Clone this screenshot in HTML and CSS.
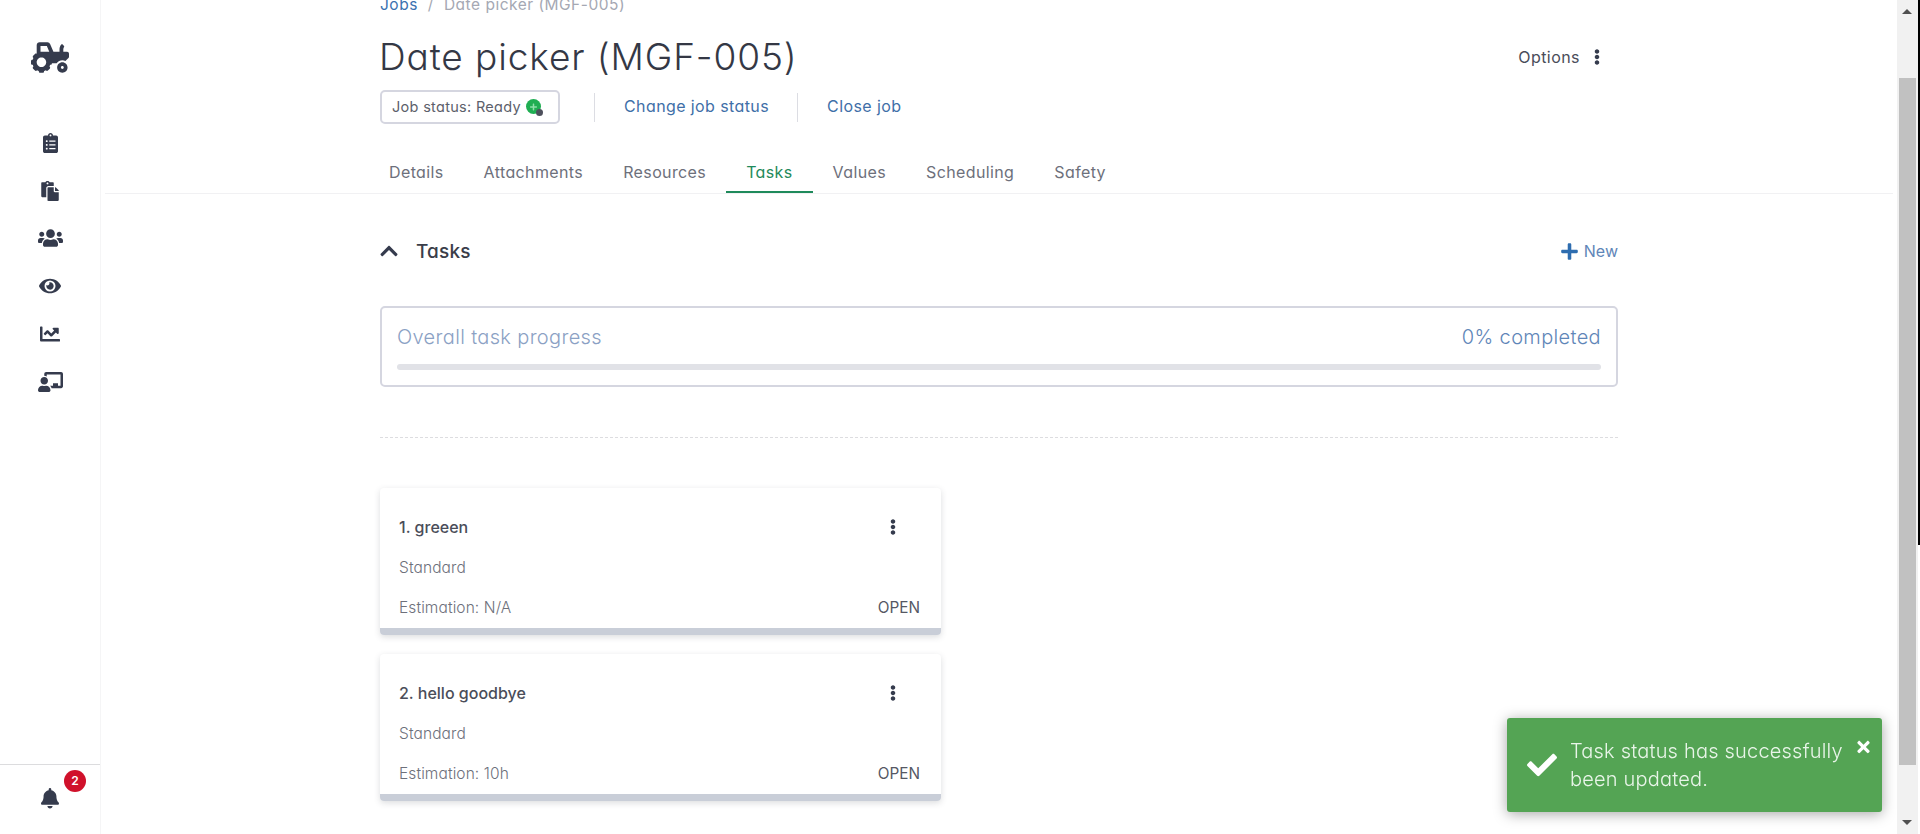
FILE: index.html
```html
<!DOCTYPE html>
<html lang="en">
<head>
    <meta charset="UTF-8">
    <title>Date picker (MGF-005)</title>
    <link rel="stylesheet" href="styles.css">
</head>
<body>

<nav class="sidebar">
    <svg class="logo" viewBox="0 0 640 512"><path d="M528 336c-48.6 0-88 39.4-88 88s39.4 88 88 88 88-39.4 88-88-39.4-88-88-88zm0 112c-13.23 0-24-10.77-24-24s10.77-24 24-24 24 10.77 24 24-10.77 24-24 24zm80-288h-64v-40.2c0-14.12 4.7-27.76 13.15-38.84 4.42-5.8 3.55-14.06-1.32-19.49L534.2 37.3c-6.66-7.45-18.32-6.92-24.7.78C490.58 60.9 480 89.81 480 119.8V160H377.67L321.58 29.14A47.914 47.914 0 0 0 277.45 0H144c-26.47 0-48 21.53-48 48v146.52c-8.63-6.73-20.96-6.46-28.89 1.47L36 227.1c-8.59 8.59-8.59 22.52 0 31.11l5.06 5.06c-4.99 9.26-8.96 18.82-11.91 28.72H22c-12.15 0-22 9.85-22 22v44c0 12.15 9.85 22 22 22h7.14c2.96 9.91 6.92 19.46 11.91 28.73l-5.06 5.06c-8.59 8.59-8.59 22.52 0 31.11L67.1 476c8.59 8.59 22.52 8.59 31.11 0l5.06-5.06c9.26 4.99 18.82 8.96 28.72 11.91V490c0 12.15 9.85 22 22 22h44c12.15 0 22-9.85 22-22v-7.14c9.9-2.95 19.46-6.92 28.72-11.91l5.06 5.06c8.59 8.59 22.52 8.59 31.11 0l31.11-31.11c8.59-8.59 8.59-22.52 0-31.11l-5.06-5.06c4.99-9.26 8.96-18.82 11.91-28.72H330c12.15 0 22-9.85 22-22v-6h80.54c21.91-28.99 56.32-48 95.46-48 18.64 0 36.07 4.61 51.8 12.2l50.82-50.82c6-6 9.37-14.14 9.37-22.63V192c.01-17.67-14.32-32-31.99-32zM176 416c-44.18 0-80-35.82-80-80s35.82-80 80-80 80 35.82 80 80-35.82 80-80 80zm22-256h-38V64h106.89l41.15 96H198z"/></svg>

    <div class="nav-icons">
        <span class="nav-icon"><svg class="ic-clip" viewBox="0 0 384 512"><path d="M336 64h-80c0-35.3-28.7-64-64-64s-64 28.7-64 64H48C21.5 64 0 85.5 0 112v352c0 26.5 21.5 48 48 48h288c26.5 0 48-21.5 48-48V112c0-26.5-21.5-48-48-48zM96 424c-13.3 0-24-10.7-24-24s10.7-24 24-24 24 10.7 24 24-10.7 24-24 24zm0-96c-13.3 0-24-10.7-24-24s10.7-24 24-24 24 10.7 24 24-10.7 24-24 24zm0-96c-13.3 0-24-10.7-24-24s10.7-24 24-24 24 10.7 24 24-10.7 24-24 24zm96-192c13.3 0 24 10.7 24 24s-10.7 24-24 24-24-10.7-24-24 10.7-24 24-24zm128 368c0 4.4-3.6 8-8 8H168c-4.4 0-8-3.6-8-8v-16c0-4.4 3.6-8 8-8h144c4.4 0 8 3.6 8 8v16zm0-96c0 4.4-3.6 8-8 8H168c-4.4 0-8-3.6-8-8v-16c0-4.4 3.6-8 8-8h144c4.4 0 8 3.6 8 8v16zm0-96c0 4.4-3.6 8-8 8H168c-4.4 0-8-3.6-8-8v-16c0-4.4 3.6-8 8-8h144c4.4 0 8 3.6 8 8v16z"/></svg></span>
        <span class="nav-icon"><svg class="ic-copy" viewBox="0 0 448 512"><path d="M128 184c0-30.879 25.122-56 56-56h136V56c0-13.255-10.745-24-24-24h-80.61C204.306 12.89 183.637 0 160 0s-44.306 12.89-55.39 32H24C10.745 32 0 42.745 0 56v336c0 13.255 10.745 24 24 24h104V184zm32-144c13.255 0 24 10.745 24 24s-10.745 24-24 24-24-10.745-24-24 10.745-24 24-24zm184 248h104v200c0 13.255-10.745 24-24 24H184c-13.255 0-24-10.745-24-24V184c0-13.255 10.745-24 24-24h136v104c0 13.2 10.8 24 24 24zm104-38.059V256h-96v-96h6.059a24 24 0 0 1 16.97 7.029l65.941 65.941a24.002 24.002 0 0 1 7.03 16.971z"/></svg></span>
        <span class="nav-icon"><svg class="ic-users" viewBox="0 0 640 512"><path d="M96 224c35.3 0 64-28.7 64-64s-28.7-64-64-64-64 28.7-64 64 28.7 64 64 64zm448 0c35.3 0 64-28.7 64-64s-28.7-64-64-64-64 28.7-64 64 28.7 64 64 64zm32 32h-64c-17.6 0-33.5 7.1-45.1 18.6 40.3 22.1 68.9 62 75.1 109.4h66c17.7 0 32-14.3 32-32v-32c0-35.3-28.7-64-64-64zm-256 0c61.9 0 112-50.1 112-112S381.9 32 320 32 208 82.1 208 144s50.1 112 112 112zm76.8 32h-8.3c-20.8 10-43.9 16-68.5 16s-47.6-6-68.5-16h-8.3C179.6 288 128 339.6 128 403.2V432c0 26.5 21.5 48 48 48h288c26.5 0 48-21.5 48-48v-28.8c0-63.6-51.6-115.2-115.2-115.2zm-223.7-13.4C161.5 263.1 145.6 256 128 256H64c-35.3 0-64 28.7-64 64v32c0 17.7 14.3 32 32 32h65.9c6.3-47.4 34.9-87.3 75.2-109.4z"/></svg></span>
        <span class="nav-icon"><svg class="ic-eye" viewBox="0 0 576 512"><path d="M572.52 241.4C518.29 135.59 410.93 64 288 64S57.68 135.64 3.48 241.41a32.35 32.35 0 0 0 0 29.19C57.71 376.41 165.07 448 288 448s230.32-71.64 284.52-177.41a32.35 32.35 0 0 0 0-29.19zM288 400a144 144 0 1 1 144-144 143.93 143.93 0 0 1-144 144zm0-240a95.31 95.31 0 0 0-25.31 3.79 47.85 47.85 0 0 1-66.9 66.9A95.78 95.78 0 1 0 288 160z"/></svg></span>
        <span class="nav-icon"><svg class="ic-chart" viewBox="0 0 512 512"><path d="M496 384H64V80c0-8.84-7.16-16-16-16H16C7.16 64 0 71.16 0 80v336c0 17.67 14.33 32 32 32h464c8.84 0 16-7.16 16-16v-32c0-8.84-7.16-16-16-16zM464 96H345.94c-21.38 0-32.09 25.85-16.97 40.97l32.4 32.4L288 242.75l-73.37-73.37c-12.5-12.5-32.76-12.5-45.25 0l-68.69 68.69c-6.25 6.25-6.25 16.38 0 22.63l22.62 22.62c6.25 6.25 16.38 6.25 22.63 0L192 237.25l73.37 73.37c12.5 12.5 32.76 12.5 45.25 0l96-96 32.4 32.4c15.12 15.12 40.97 4.41 40.97-16.97V112c.01-8.84-7.15-16-15.99-16z"/></svg></span>
        <span class="nav-icon"><svg class="ic-board" viewBox="0 0 640 512"><path d="M208 352c-2.39 0-4.78.35-7.06 1.09C187.98 357.3 174.35 360 160 360c-14.35 0-27.98-2.7-40.95-6.91-2.28-.74-4.66-1.09-7.05-1.09C49.94 352-.33 402.48 0 464.62.14 490.88 21.73 512 48 512h224c26.27 0 47.86-21.12 48-47.38.33-62.14-49.94-112.62-112-112.62zm-48-32c53.02 0 96-42.98 96-96s-42.98-96-96-96-96 42.98-96 96 42.98 96 96 96zM592 0H208c-26.47 0-48 22.25-48 49.59V96c23.42 0 45.1 6.78 64 17.8V64h352v288h-64v-64H384v64h-76.24c19.1 16.69 33.12 38.73 39.69 64H592c26.47 0 48-22.25 48-49.59V49.59C640 22.25 618.47 0 592 0z"/></svg></span>
    </div>

    <div class="nav-bottom">
        <span class="bell">
            <svg viewBox="0 0 448 512"><path d="M224 512c35.32 0 63.97-28.65 63.97-64H160.03c0 35.35 28.65 64 63.97 64zm215.39-149.71c-19.32-20.76-55.47-51.99-55.47-154.29 0-77.7-54.48-139.9-127.94-155.16V32c0-17.67-14.32-32-31.98-32s-31.98 14.33-31.98 32v20.84C118.56 68.1 64.08 130.3 64.08 208c0 102.3-36.15 133.53-55.47 154.29-6 6.45-8.66 14.16-8.61 21.71.11 16.4 12.98 32 32.1 32h383.8c19.12 0 32-15.6 32.1-32 .05-7.55-2.61-15.27-8.61-21.71z"/></svg>
            <span class="badge">2</span>
        </span>
    </div>
</nav>

<main class="main">
    <div class="wrap">
        <div class="breadcrumb"><a href="#">Jobs</a><span class="sep">/</span><span>Date picker (MGF-005)</span></div>
        <div class="title-row">
            <h1>Date picker (MGF-005)</h1>
            <div class="options">Options
                <svg class="dots" viewBox="0 0 192 512"><path d="M96 184c39.8 0 72 32.2 72 72s-32.2 72-72 72-72-32.2-72-72 32.2-72 72-72zM24 80c0 39.8 32.2 72 72 72s72-32.2 72-72S135.8 8 96 8 24 40.2 24 80zm0 352c0 39.8 32.2 72 72 72s72-32.2 72-72-32.2-72-72-72-72 32.2-72 72z"/></svg>
            </div>
        </div>
        <div class="status-row">
            <div class="status-pill">Job status: Ready
                <span class="status-dot"><svg viewBox="0 0 448 512"><path d="M416 208H272V64c0-17.67-14.33-32-32-32h-32c-17.67 0-32 14.33-32 32v144H32c-17.67 0-32 14.33-32 32v32c0 17.67 14.33 32 32 32h144v144c0 17.67 14.33 32 32 32h32c17.67 0 32-14.33 32-32V304h144c17.67 0 32-14.33 32-32v-32c0-17.67-14.33-32-32-32z"/></svg></span>
            </div>
            <a class="status-link first" href="#">Change job status</a>
            <a class="status-link" href="#">Close job</a>
        </div>
    </div>

    <div class="tabs">
        <a class="tab" href="#">Details</a>
        <a class="tab" href="#">Attachments</a>
        <a class="tab" href="#">Resources</a>
        <a class="tab active" href="#">Tasks</a>
        <a class="tab" href="#">Values</a>
        <a class="tab" href="#">Scheduling</a>
        <a class="tab" href="#">Safety</a>
    </div>

    <div class="wrap">
        <div class="section-head">
            <svg class="chevron" viewBox="0 0 448 512"><path d="M240.971 130.524l194.343 194.343c9.373 9.373 9.373 24.569 0 33.941l-22.667 22.667c-9.357 9.357-24.522 9.375-33.901.04L224 227.495 69.255 381.516c-9.379 9.335-24.544 9.317-33.901-.04l-22.667-22.667c-9.373-9.373-9.373-24.569 0-33.941L207.03 130.525c9.372-9.373 24.568-9.373 33.941-.001z"/></svg>
            <h2>Tasks</h2>
            <a class="new-link" href="#">
                <svg viewBox="0 0 448 512"><path d="M416 208H272V64c0-17.67-14.33-32-32-32h-32c-17.67 0-32 14.33-32 32v144H32c-17.67 0-32 14.33-32 32v32c0 17.67 14.33 32 32 32h144v144c0 17.67 14.33 32 32 32h32c17.67 0 32-14.33 32-32V304h144c17.67 0 32-14.33 32-32v-32c0-17.67-14.33-32-32-32z"/></svg>
                New
            </a>
        </div>

        <div class="progress-card">
            <div class="progress-text">
                <span class="progress-label">Overall task progress</span>
                <span class="progress-value">0% completed</span>
            </div>
            <div class="progress-bar"></div>
        </div>

        <div class="dotted"></div>

        <div class="task-card">
            <div class="task-row">
                <span class="task-title">1. greeen</span>
                <svg class="dots task-dots" viewBox="0 0 192 512"><path d="M96 184c39.8 0 72 32.2 72 72s-32.2 72-72 72-72-32.2-72-72 32.2-72 72-72zM24 80c0 39.8 32.2 72 72 72s72-32.2 72-72S135.8 8 96 8 24 40.2 24 80zm0 352c0 39.8 32.2 72 72 72s72-32.2 72-72-32.2-72-72-72-72 32.2-72 72z"/></svg>
            </div>
            <div class="task-row"><span class="task-sub">Standard</span></div>
            <div class="task-row"><span class="task-sub">Estimation: N/A</span><span class="task-state">OPEN</span></div>
        </div>

        <div class="task-card">
            <div class="task-row">
                <span class="task-title">2. hello goodbye</span>
                <svg class="dots task-dots" viewBox="0 0 192 512"><path d="M96 184c39.8 0 72 32.2 72 72s-32.2 72-72 72-72-32.2-72-72 32.2-72 72-72zM24 80c0 39.8 32.2 72 72 72s72-32.2 72-72S135.8 8 96 8 24 40.2 24 80zm0 352c0 39.8 32.2 72 72 72s72-32.2 72-72-32.2-72-72-72-72 32.2-72 72z"/></svg>
            </div>
            <div class="task-row"><span class="task-sub">Standard</span></div>
            <div class="task-row"><span class="task-sub">Estimation: 10h</span><span class="task-state">OPEN</span></div>
        </div>
    </div>
</main>

<div class="scrollbar">
    <span class="arrow up"></span>
    <div class="thumb"></div>
    <span class="arrow down"></span>
</div>

<div class="toast">
    <svg class="toast-check" viewBox="0 0 512 512"><path d="M173.898 439.404l-166.4-166.4c-9.997-9.997-9.997-26.206 0-36.204l36.203-36.204c9.997-9.998 26.207-9.998 36.204 0L192 312.69 432.095 72.596c9.997-9.997 26.207-9.997 36.204 0l36.203 36.204c9.997 9.997 9.997 26.206 0 36.204l-294.4 294.401c-9.998 9.997-26.207 9.997-36.204-.001z"/></svg>
    <p>Task status has successfully been updated.</p>
    <svg class="toast-close" viewBox="0 0 352 512"><path d="M242.72 256l100.07-100.07c12.28-12.28 12.28-32.19 0-44.48l-22.24-22.24c-12.28-12.28-32.19-12.28-44.48 0L176 189.28 75.93 89.21c-12.28-12.28-32.19-12.28-44.48 0L9.21 111.45c-12.28 12.28-12.28 32.19 0 44.48L109.28 256 9.21 356.07c-12.28 12.28-12.28 32.19 0 44.48l22.24 22.24c12.28 12.28 32.2 12.28 44.48 0L176 322.72l100.07 100.07c12.28 12.28 32.2 12.28 44.48 0l22.24-22.24c12.28-12.28 12.28-32.19 0-44.48L242.72 256z"/></svg>
</div>

</body>
</html>
```

FILE: styles.css
```css
/* Job detail page */
* {
    box-sizing: border-box;
}

html, body {
    height: 100%;
}

body {
    margin: 0;
    display: flex;
    height: 834px;
    overflow: hidden;
    background-color: white;
    color: #50535f;
    font-family: Inter, "Noto Sans", sans-serif;
    font-feature-settings: "cv11";
}

a {
    text-decoration: none;
}

svg {
    display: block;
    fill: currentColor;
}

/* Sidebar */
.sidebar {
    width: 101px;
    flex-shrink: 0;
    display: flex;
    flex-direction: column;
    align-items: center;
    border-right: 1px solid #f5f5f6;
    color: #353b4d;
}

.logo {
    width: 38px;
    height: 31px;
    margin-top: 42px;
}

.nav-icons {
    display: flex;
    flex-direction: column;
    align-items: center;
    margin-top: 46px;
}

.nav-icon {
    height: 47.8px;
    display: flex;
    align-items: center;
    justify-content: center;
}

.ic-clip { width: 15px; height: 20px; }
.ic-copy { width: 18px; height: 20px; }
.ic-users { width: 25px; height: 20px; }
.ic-eye { width: 22px; height: 20px; }
.ic-chart { width: 20px; height: 20px; }
.ic-board { width: 25px; height: 20px; }

.nav-bottom {
    margin-top: auto;
    width: 100%;
    height: 70px;
    border-top: 1px solid #dcdcde;
    display: flex;
    justify-content: center;
    padding-top: 23px;
}

.bell {
    position: relative;
    width: 18px;
    height: 20px;
}

.badge {
    position: absolute;
    left: 23px;
    top: -18px;
    width: 22px;
    height: 22px;
    border-radius: 50%;
    background-color: #d0112b;
    color: white;
    font-size: 12px;
    font-weight: 600;
    line-height: 22px;
    text-align: center;
}

/* Main column */
.main {
    flex: 1;
    min-width: 0;
}

.wrap {
    width: 1238px;
    margin: 0 auto;
}

.breadcrumb {
    height: 20px;
    margin-top: -5px;
    font-size: 15.5px;
    line-height: 20px;
    color: #a5a8b3;
    letter-spacing: 0.5px;
}

.breadcrumb a {
    color: #3b72b0;
}

.sep {
    margin: 0 10px;
}

.title-row {
    display: flex;
    justify-content: space-between;
    align-items: center;
    margin-top: 20px;
    height: 44px;
}

h1 {
    margin: 0 0 0 -1px;
    font-size: 37px;
    font-weight: 300;
    line-height: 44px;
    color: #343845;
    letter-spacing: 0.9px;
}

.options {
    display: flex;
    align-items: center;
    gap: 14px;
    margin-right: 18px;
    font-size: 16px;
    letter-spacing: 0.45px;
    color: #4a4d59;
}

.dots {
    width: 6px;
    height: 16px;
    color: #353b4d;
}

.status-row {
    display: flex;
    align-items: center;
    height: 34px;
    margin-top: 11px;
}

.status-pill {
    display: flex;
    align-items: center;
    gap: 5px;
    width: 180px;
    height: 34px;
    padding: 0 0 2px 10px;
    border: 2px solid #d5d6e0;
    border-radius: 5px;
    font-size: 14.5px;
    letter-spacing: 0.3px;
    color: #5c5f6b;
}

.status-dot {
    position: relative;
    width: 15px;
    height: 15px;
    padding: 4px;
    border-radius: 50%;
    background-color: #1fae52;
    color: #8fe0a9;
}

.status-dot::after {
    content: "";
    position: absolute;
    right: -2px;
    bottom: -2px;
    width: 7px;
    height: 7px;
    border-radius: 50%;
    background-color: #4d505c;
}

.status-link {
    height: 29px;
    line-height: 27px;
    padding-left: 29px;
    border-left: 1px solid #dcdde3;
    margin-left: 28px;
    font-size: 16px;
    letter-spacing: 0.4px;
    color: #3f6fa8;
}

.status-link.first {
    margin-left: 34px;
}

/* Tabs */
.tabs {
    display: flex;
    margin: 27px 4px 0;
    padding-left: 264px;
    border-bottom: 1px solid #f1f1f3;
}

.tab {
    height: 42px;
    padding: 0 20px;
    line-height: 42px;
    font-size: 16px;
    letter-spacing: 0.38px;
    color: #6d707b;
    border-bottom: 2px solid transparent;
}

.tab.active {
    color: #1f8a5b;
    border-bottom-color: #1f8a5b;
}

/* Tasks section */
.section-head {
    display: flex;
    align-items: center;
    height: 24px;
    margin-top: 45px;
}

.chevron {
    width: 18px;
    height: 20px;
    color: #353b4d;
}

h2 {
    margin: 0 0 0 18px;
    font-size: 19px;
    font-weight: 500;
    letter-spacing: 0.2px;
    color: #3a3d49;
}

.new-link {
    margin-left: auto;
    display: flex;
    align-items: center;
    gap: 6px;
    font-size: 16px;
    color: #5f86b8;
}

.new-link svg {
    width: 17px;
    height: 19px;
    color: #2e6db0;
}

.progress-card {
    height: 81px;
    margin-top: 43px;
    padding: 17px 15px 0;
    border: 2px solid #d5d6e0;
    border-radius: 5px;
}

.progress-text {
    display: flex;
    justify-content: space-between;
    height: 26px;
    line-height: 24px;
    font-size: 20px;
    font-weight: 300;
    letter-spacing: 0.35px;
}

.progress-label {
    color: #8ba1c4;
}

.progress-value {
    color: #5f86b8;
}

.progress-bar {
    height: 6px;
    margin-top: 13px;
    border-radius: 3px;
    background-color: #e1e2e7;
}

.dotted {
    height: 1px;
    margin-top: 50px;
    border-top: 1px dashed #dddde0;
}

.task-card {
    width: 561px;
    height: 147px;
    margin-top: 50px;
    padding: 19px 21px 0 19px;
    border-bottom: 7px solid #c9ced8;
    border-radius: 4px;
    box-shadow: 0 2px 6px rgba(60, 64, 80, 0.18);
}

.task-card + .task-card {
    margin-top: 19px;
}

.task-row {
    display: flex;
    justify-content: space-between;
    align-items: center;
    height: 40px;
}

.task-title {
    font-size: 16px;
    font-weight: 500;
    color: #4a4d59;
}

.task-sub {
    font-size: 15.5px;
    font-weight: 300;
    letter-spacing: 0.1px;
    color: #6d707b;
}

.task-state {
    font-size: 15.3px;
    color: #555864;
}

.task-dots {
    margin-right: 24px;
}

/* Fake window scrollbar */
.scrollbar {
    position: relative;
    width: 21px;
    flex-shrink: 0;
    margin-right: 2px;
    padding: 78px 2px 0;
    background-color: #f1f1f1;
}

.scrollbar::after {
    content: "";
    position: absolute;
    top: 0;
    left: 21px;
    width: 2px;
    height: 545px;
    background-color: black;
}

.thumb {
    height: 687px;
    background-color: #c1c1c1;
}

.arrow {
    position: absolute;
    left: 5px;
    border-left: 5px solid transparent;
    border-right: 5px solid transparent;
}

.arrow.up {
    top: 9px;
    border-bottom: 5px solid #505050;
}

.arrow.down {
    bottom: 9px;
    border-top: 5px solid #505050;
}

/* Toast */
.toast {
    position: fixed;
    left: 1507px;
    top: 718px;
    display: flex;
    align-items: center;
    width: 375px;
    height: 94px;
    padding: 0 12px 0 20px;
    border-radius: 3px;
    background-color: #54a454;
    box-shadow: 0 2px 14px rgba(0, 0, 0, 0.35);
    color: #e9f5e9;
}

.toast p {
    margin: 0 0 1px 13px;
    width: 284px;
    font-size: 20px;
    font-weight: 300;
    letter-spacing: 0.2px;
    line-height: 28px;
}

.toast-check {
    width: 30px;
    height: 30px;
    color: white;
    flex-shrink: 0;
}

.toast-close {
    position: absolute;
    right: 12px;
    top: 20px;
    width: 13px;
    height: 18px;
    color: white;
}
```
